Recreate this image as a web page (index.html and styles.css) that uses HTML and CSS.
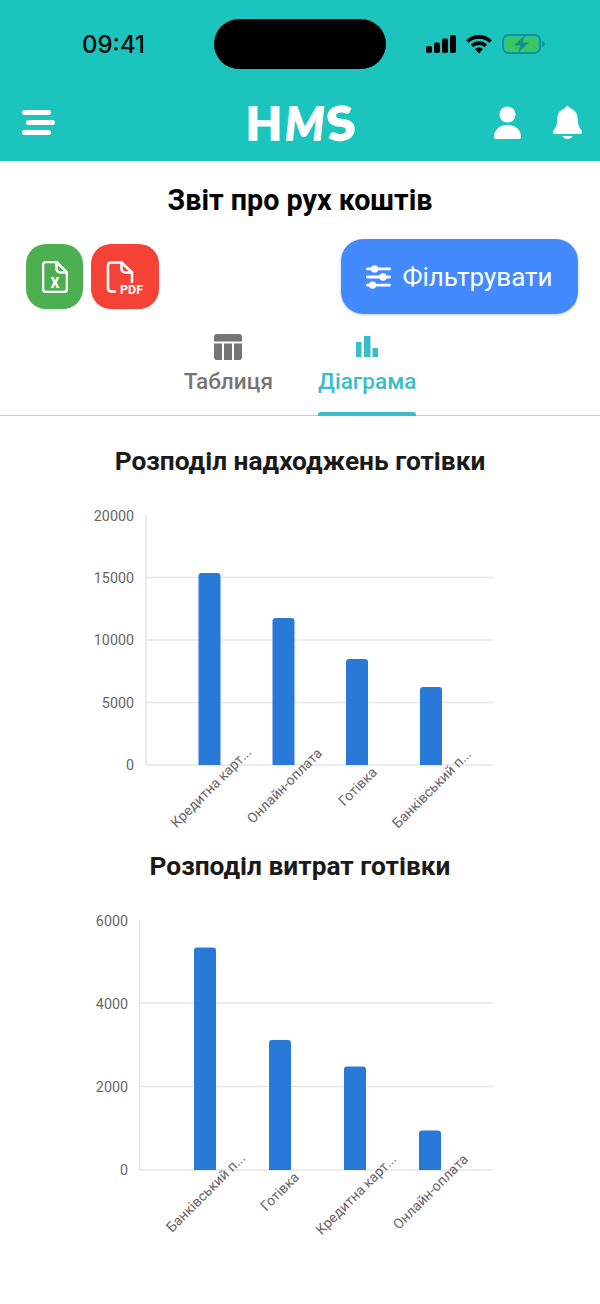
FILE: index.html
```html
<!DOCTYPE html>
<html lang="uk">
<head>
    <meta charset="UTF-8">
    <meta name="viewport" content="width=device-width, initial-scale=1.0">
    <title>Звіт про рух коштів</title>
    <link rel="stylesheet" href="styles.css">
</head>
<body>

    <header class="header">
        <div class="status-bar">
            <span class="time">09:41</span>
            <div class="island"></div>
            <div class="status-icons">
                <svg width="30" height="18" viewBox="0 0 30 18">
                    <rect x="0" y="11" width="6" height="7" rx="1.800"/>
                    <rect x="8" y="7.500" width="6" height="10.500" rx="1.800"/>
                    <rect x="16" y="3.500" width="6" height="14.500" rx="1.800"/>
                    <rect x="24" y="0" width="6" height="18" rx="1.800"/>
                </svg>
                <svg width="26" height="19" viewBox="0 0 27 20">
                    <path d="M13.5 0C8.3 0 3.6 2 0 5.4l2.7 2.8C5.5 5.5 9.3 3.9 13.5 3.9s8 1.6 10.8 4.3L27 5.4C23.400 2 18.700 0 13.500 0z"/>
                    <path d="M13.500 6.600c-3.300 0-6.300 1.300-8.600 3.400l2.700 2.800c1.500-1.400 3.600-2.300 5.900-2.300s4.400 0.900 5.900 2.300l2.700-2.800c-2.300-2.100-5.300-3.400-8.600-3.400z"/>
                    <path d="M13.500 13.200c-1.600 0-3 0.600-4.100 1.600l4.100 4.600 4.100-4.600c-1.100-1-2.500-1.600-4.100-1.600z"/>
                </svg>
                <svg width="43" height="20" viewBox="0 0 43 20">
                    <rect x="1" y="1" width="37" height="18" rx="5.500" fill="none" stroke="#129089" stroke-width="1.800"/>
                    <rect x="3.500" y="3.500" width="32" height="13" rx="3.500" fill="#3dc65c"/>
                    <path d="M40 7v6c1.700-0.500 2.800-1.600 2.800-3s-1.100-2.500-2.800-3z" fill="#129089"/>
                    <path d="M23 1L12 11.500h6.500L16 19 27 8.500h-6.500z" fill="#129089"/>
                </svg>
            </div>
        </div>
        <nav class="nav-bar">
            <div class="menu-icon">
                <span></span>
                <span></span>
                <span></span>
            </div>
            <div class="logo"><span class="logo-h">H</span><span class="logo-m">M</span><span class="logo-s">S</span></div>
            <div class="nav-actions">
                <svg width="27" height="33" viewBox="0 0 27 33" fill="#fff">
                    <circle cx="13.500" cy="8.500" r="8"/>
                    <path d="M0 31c0-7.500 6-12 13.500-12S27 23.500 27 31c0 1.200-0.800 2-2 2H2c-1.200 0-2-0.800-2-2z"/>
                </svg>
                <svg width="29" height="33" viewBox="0 0 29 33" fill="#fff">
                    <path d="M14.500 0c-1.200 0-2.200 1-2.300 2.200C7.200 3.300 4.300 7.500 4.300 13c0 5.500-1.400 8.700-3.800 11.200-1 1.100-0.500 3.800 1 3.800h26c1.500 0 2-2.700 1-3.800-2.400-2.500-3.800-5.700-3.800-11.200 0-5.500-2.900-9.700-7.900-10.800C16.700 1 15.700 0 14.500 0z"/>
                    <path d="M9.500 30h10c-0.800 2-2.800 3-5 3s-4.200-1-5-3z"/>
                </svg>
            </div>
        </nav>
    </header>

    <main>
        <h1 class="page-title">Звіт про рух коштів</h1>

        <div class="actions">
            <div class="export-buttons">
                <button class="export-btn excel">
                    <svg width="26" height="32" viewBox="0 0 26 32" fill="none" stroke="#fff" stroke-width="2.600" stroke-linejoin="round">
                        <path d="M4 1h10.500L25 11.500V28a3 3 0 0 1-3 3H4a3 3 0 0 1-3-3V4a3 3 0 0 1 3-3z"/>
                        <path d="M14.500 1v6.500a4 4 0 0 0 4 4H25"/>
                        <text x="13" y="27" class="file-letter">X</text>
                    </svg>
                </button>
                <button class="export-btn pdf">
                    <svg width="40" height="36" viewBox="-2 -1 40 36" fill="none" stroke="#fff" stroke-width="2.600" stroke-linejoin="round" stroke-linecap="round">
                        <path d="M25 22V12.500L14.500 2.500H4a3 3 0 0 0-3 3v23a3 3 0 0 0 3 3h4"/>
                        <path d="M14.500 2.500v6a4 4 0 0 0 4 4H25"/>
                        <text x="24.500" y="33.500" class="file-pdf">PDF</text>
                    </svg>
                </button>
            </div>
            <button class="filter-btn">
                <svg width="25" height="24" viewBox="0 0 25 24" fill="#fff">
                    <rect x="0" y="2.500" width="25" height="2.800" rx="1.400"/>
                    <rect x="0" y="10.600" width="25" height="2.800" rx="1.400"/>
                    <rect x="0" y="18.700" width="25" height="2.800" rx="1.400"/>
                    <circle cx="8.500" cy="3.900" r="3.700"/>
                    <circle cx="17" cy="12" r="3.700"/>
                    <circle cx="6.500" cy="20.100" r="3.700"/>
                </svg>
                Фільтрувати
            </button>
        </div>

        <div class="tabs">
            <div class="tab">
                <svg width="28" height="26" viewBox="0 0 28 26" fill="#757575">
                    <path d="M3 0h22a3 3 0 0 1 3 3v4.500H0V3a3 3 0 0 1 3-3z"/>
                    <path d="M0 9.500h8V26H3a3 3 0 0 1-3-3z"/>
                    <rect x="10" y="9.500" width="8" height="16.500"/>
                    <path d="M20 9.500h8V23a3 3 0 0 1-3 3h-5z"/>
                </svg>
                <span>Таблиця</span>
            </div>
            <div class="tab active">
                <svg width="28" height="26" viewBox="0 0 28 26" fill="#3bbdc9">
                    <rect x="3" y="8" width="5.500" height="15"/>
                    <rect x="11" y="2" width="6.500" height="21"/>
                    <rect x="19.500" y="14" width="5.500" height="9"/>
                </svg>
                <span>Діаграма</span>
            </div>
        </div>

        <section class="chart-section income">
            <h2 class="chart-title">Розподіл надходжень готівки</h2>
            <svg class="chart" width="600" height="350" viewBox="0 505 600 350">
                <line class="axis" x1="146" y1="515" x2="146" y2="765"/>
                <line class="grid" x1="146" y1="577.500" x2="493" y2="577.500"/>
                <line class="grid" x1="146" y1="640" x2="493" y2="640"/>
                <line class="grid" x1="146" y1="702.500" x2="493" y2="702.500"/>
                <line class="grid" x1="146" y1="765" x2="493" y2="765"/>

                <text class="y-label" x="134" y="520.500">20000</text>
                <text class="y-label" x="134" y="583">15000</text>
                <text class="y-label" x="134" y="645">10000</text>
                <text class="y-label" x="134" y="708">5000</text>
                <text class="y-label" x="134" y="770">0</text>

                <path class="bar" d="M198.500 765V576a3 3 0 0 1 3-3h16a3 3 0 0 1 3 3V765z"/>
                <path class="bar" d="M272.500 765V621a3 3 0 0 1 3-3h16a3 3 0 0 1 3 3V765z"/>
                <path class="bar" d="M346 765V662a3 3 0 0 1 3-3h16a3 3 0 0 1 3 3V765z"/>
                <path class="bar" d="M420 765V690a3 3 0 0 1 3-3h16a3 3 0 0 1 3 3V765z"/>

                <text class="x-label" transform="translate(252 753) rotate(-45)">Кредитна карт...</text>
                <text class="x-label" transform="translate(323 754) rotate(-45)">Онлайн-оплата</text>
                <text class="x-label" transform="translate(378 773) rotate(-45)">Готівка</text>
                <text class="x-label" transform="translate(472 755) rotate(-45)">Банківський п...</text>
            </svg>
        </section>

        <section class="chart-section expense">
            <h2 class="chart-title">Розподіл витрат готівки</h2>
            <svg class="chart" width="600" height="350" viewBox="0 910 600 350">
                <line class="axis" x1="139.500" y1="921" x2="139.500" y2="1170"/>
                <line class="grid" x1="139.500" y1="1003" x2="493" y2="1003"/>
                <line class="grid" x1="139.500" y1="1086.500" x2="493" y2="1086.500"/>
                <line class="grid" x1="139.500" y1="1170" x2="493" y2="1170"/>

                <text class="y-label" x="128" y="926">6000</text>
                <text class="y-label" x="128" y="1009">4000</text>
                <text class="y-label" x="128" y="1092">2000</text>
                <text class="y-label" x="128" y="1175">0</text>

                <path class="bar" d="M194 1170V950.500a3 3 0 0 1 3-3h16a3 3 0 0 1 3 3V1170z"/>
                <path class="bar" d="M269 1170V1043a3 3 0 0 1 3-3h16a3 3 0 0 1 3 3V1170z"/>
                <path class="bar" d="M344 1170V1069.500a3 3 0 0 1 3-3h16a3 3 0 0 1 3 3V1170z"/>
                <path class="bar" d="M419 1170V1133.500a3 3 0 0 1 3-3h16a3 3 0 0 1 3 3V1170z"/>

                <text class="x-label" transform="translate(246 1159) rotate(-45)">Банківський п...</text>
                <text class="x-label" transform="translate(300 1178) rotate(-45)">Готівка</text>
                <text class="x-label" transform="translate(397 1160) rotate(-45)">Кредитна карт...</text>
                <text class="x-label" transform="translate(469 1160) rotate(-45)">Онлайн-оплата</text>
            </svg>
        </section>
    </main>

</body>
</html>
```

FILE: styles.css
```css
* {
    box-sizing: border-box;
}
body {
    margin: 0;
    font-family: Roboto, "Liberation Sans", sans-serif;
    background-color: #fff;
    color: #111;
}
.header {
    height: 161px;
    background: #1bc5bd;
}
.status-bar {
    height: 90px;
    padding: 19px 55px 0 82px;
    display: flex;
    align-items: flex-start;
}
.time {
    width: 132px;
    margin-top: 11px;
    font-family: Inter, Roboto, sans-serif;
    font-size: 24px;
    font-weight: 500;
    line-height: 30px;
    color: #0a0a0a;
}
.island {
    width: 172px;
    height: 50px;
    background: #000;
    border-radius: 25px;
}
.status-icons {
    margin-left: 40px;
    margin-top: 15px;
    display: flex;
    align-items: center;
    gap: 10px;
}
.status-icons svg {
    display: block;
}
.nav-bar {
    height: 71px;
    padding: 0 18px 0 22px;
    display: flex;
    align-items: flex-start;
    justify-content: space-between;
}
.menu-icon {
    width: 33px;
    margin-top: 20px;
    display: flex;
    flex-direction: column;
    gap: 5px;
}
.menu-icon span {
    display: block;
    height: 5px;
    width: 28.500px;
    background: #fff;
    border-radius: 3px;
}
.menu-icon span:nth-child(2) {
    margin-left: 4px;
}
.logo {
    margin-top: 11px;
    margin-left: 50px;
    display: flex;
    align-items: center;
    height: 44px;
    font-family: Lato, sans-serif;
    font-size: 46px;
    font-weight: 900;
    line-height: 44px;
    color: #fff;
    -webkit-text-stroke: 1.500px #fff;
}
.logo span {
    display: block;
}
.logo-h {
    transform: scaleX(1.020);
}
.logo-m {
    margin-left: 1px;
    transform: skewX(-6deg) scaleX(0.900);
}
.logo-s {
    margin-left: 1px;
    transform: rotate(-8deg) scaleX(1.100);
}
.nav-actions {
    margin-top: 16px;
    display: flex;
    gap: 32px;
}
.page-title {
    margin: 23px 0 0;
    text-align: center;
    font-size: 28.700px;
    font-weight: 700;
    line-height: 33px;
    color: #000;
}
.actions {
    margin-top: 22px;
    padding: 0 22px 0 26px;
    height: 75px;
    display: flex;
    justify-content: space-between;
    align-items: flex-start;
}
.export-buttons {
    margin-top: 5px;
    display: flex;
    gap: 8px;
}
.export-btn {
    height: 65px;
    border: none;
    border-radius: 20px;
    padding: 0;
    display: flex;
    align-items: center;
    justify-content: center;
}
.excel {
    width: 57px;
    background: #4caf50;
}
.pdf {
    width: 68px;
    background: #f44336;
}
.file-letter {
    font-family: Roboto, sans-serif;
    font-size: 14px;
    font-weight: 900;
    text-anchor: middle;
    fill: #fff;
    stroke: none;
}
.file-pdf {
    font-family: Roboto, sans-serif;
    font-size: 12.500px;
    font-weight: 700;
    text-anchor: middle;
    fill: #fff;
    stroke: none;
}
.filter-btn {
    width: 237px;
    height: 75px;
    border: none;
    border-radius: 22px;
    background: #448aff;
    color: #fff;
    font-family: Roboto, sans-serif;
    font-size: 26px;
    display: flex;
    align-items: center;
    justify-content: center;
    gap: 11px;
    box-shadow: 0 1px 3px rgba(0, 0, 0, 0.2);
}
.tabs {
    height: 102px;
    padding-top: 20px;
    display: flex;
    justify-content: center;
    gap: 45px;
    border-bottom: 1px solid #ccc;
}
.tab {
    position: relative;
    height: 81px;
    display: flex;
    flex-direction: column;
    align-items: center;
    font-size: 22.600px;
    font-weight: 500;
    color: #757575;
}
.tab svg {
    display: block;
}
.tab span {
    margin-top: 9px;
    line-height: 26px;
}
.tab.active {
    color: #3bbdc9;
}
.tab.active::after {
    content: "";
    position: absolute;
    left: 0;
    right: 0;
    bottom: -1px;
    height: 4px;
    background: #3bbdc9;
    border-radius: 3px 3px 0 0;
}
.chart-section {
    display: flex;
    flex-direction: column;
    align-items: center;
}
.chart-section.income {
    margin-top: 29px;
}
.chart-section.expense {
    margin-top: -5px;
}
.chart-title {
    margin: 0;
    font-size: 26.300px;
    font-weight: 700;
    line-height: 32px;
    color: #1a1a1a;
}
.chart {
    display: block;
    margin-top: 28px;
}
.axis,
.grid {
    stroke: #e6e6e6;
    stroke-width: 1.500;
}
.bar {
    fill: #2979d8;
}
.y-label {
    font-family: Roboto, sans-serif;
    font-size: 14.300px;
    fill: #666;
    text-anchor: end;
}
.x-label {
    font-family: Roboto, sans-serif;
    font-size: 14px;
    fill: #666;
    text-anchor: end;
}
```
